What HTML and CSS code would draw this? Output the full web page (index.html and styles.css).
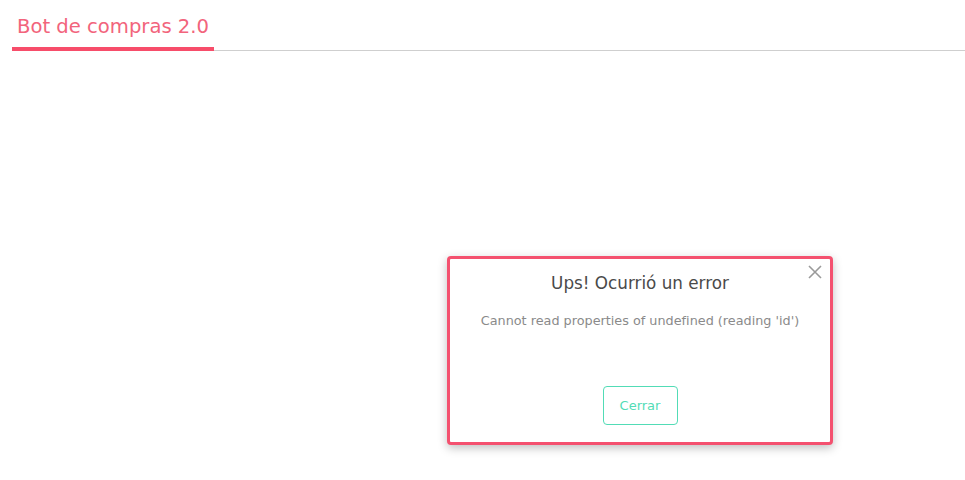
FILE: index.html
```html
<!DOCTYPE html>
<html lang="es">
<head>
    <meta charset="UTF-8">
    <meta name="viewport" content="width=device-width, initial-scale=1.0">
    <title>Bot de compras 2.0</title>
    <link rel="stylesheet" href="styles.css">
</head>
<body>
    <header class="tabs">
        <div class="tab activo">Bot de compras 2.0</div>
        <div class="tab-resto"></div>
    </header>

    <main></main>

    <div class="modal">
        <button class="cerrar-x" aria-label="Cerrar">
            <svg width="14" height="14" viewBox="0 0 14 14">
                <path d="M1 1 L13 13 M13 1 L1 13" stroke="#9a9a9a" stroke-width="1.6" fill="none"/>
            </svg>
        </button>
        <p class="modal-titulo">Ups! Ocurrió un error</p>
        <p class="modal-texto">Cannot read properties of undefined (reading 'id')</p>
        <button class="boton">Cerrar</button>
    </div>
</body>
</html>
```

FILE: styles.css
```css
* {
    margin: 0;
    padding: 0;
    box-sizing: border-box;
}
body{
    font-family: 'DejaVu Sans', sans-serif;
    background: #ffffff;
    width: 965px;
    height: 480px;
    overflow: hidden;
}
.tabs{
    display: flex;
    align-items: flex-end;
    padding-left: 12px;
    padding-top: 15px;
}
.tab{
    color: #f2647c;
    font-size: 19.6px;
    line-height: 24px;
    white-space: nowrap;
    padding: 0 0 8px 5px;
    border-bottom: 4px solid #f74d6a;
    width: 202px;
}
.tab-resto{
    flex: 1;
    border-bottom: 1px solid #cfcfcf;
}
.modal{
    position: absolute;
    left: 447px;
    top: 256px;
    width: 386px;
    height: 189px;
    border: 3px solid #f4516f;
    border-radius: 4px;
    background: #ffffff;
    box-shadow: 0 3px 10px rgba(0, 0, 0, 0.25);
    display: flex;
    flex-direction: column;
    align-items: center;
    text-align: center;
}
.cerrar-x{
    position: absolute;
    right: 8px;
    top: 6px;
    border: none;
    background: none;
}
.modal-titulo{
    margin-top: 14px;
    font-size: 16.8px;
    color: #4a4a4a;
}
.modal-texto{
    margin-top: 20px;
    font-size: 12.8px;
    color: #8a8a8a;
}
.boton{
    margin-top: 58px;
    width: 75px;
    height: 39px;
    border: 1px solid #52dcb6;
    border-radius: 4px;
    background: #ffffff;
    color: #52dcb6;
    font-family: 'DejaVu Sans', sans-serif;
    font-size: 13px;
}
```
